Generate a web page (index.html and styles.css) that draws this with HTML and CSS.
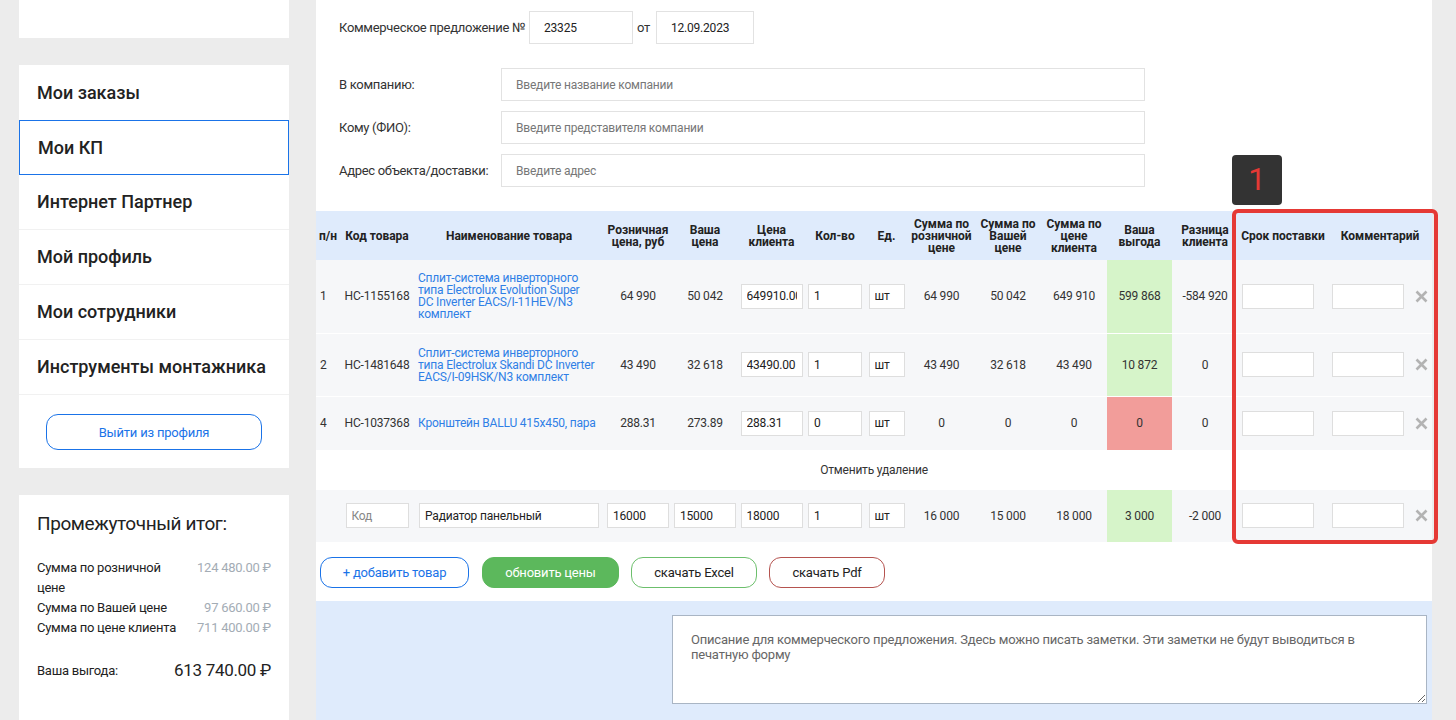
FILE: index.html
```html
<!DOCTYPE html>
<html lang="ru">
<head>
<meta charset="utf-8">
<title>Мои КП</title>
<link rel="stylesheet" href="styles.css">
</head>
<body>
<div class="page">
  <aside class="sidebar">
    <div class="card card-top"></div>
    <nav class="card menu">
      <a class="menu-item first" href="#">Мои заказы</a>
      <a class="menu-item active" href="#">Мои КП</a>
      <a class="menu-item" href="#">Интернет Партнер</a>
      <a class="menu-item" href="#">Мой профиль</a>
      <a class="menu-item" href="#">Мои сотрудники</a>
      <a class="menu-item" href="#">Инструменты монтажника</a>
      <div class="logout-wrap"><button class="logout">Выйти из профиля</button></div>
    </nav>
    <div class="card summary">
      <h3 class="summary-title">Промежуточный итог:</h3>
      <div class="sum-grid">
        <div class="sum-label">Сумма по розничной цене</div><div class="sum-val">124 480.00 ₽</div>
        <div class="sum-label">Сумма по Вашей цене</div><div class="sum-val">97 660.00 ₽</div>
        <div class="sum-label">Сумма по цене клиента</div><div class="sum-val">711 400.00 ₽</div>
      </div>
      <div class="total"><span class="total-label">Ваша выгода:</span><span class="total-val">613 740.00 ₽</span></div>
    </div>
  </aside>

  <main class="main">
    <div class="kp-head">
      <span class="kp-label">Коммерческое предложение №</span>
      <input class="field kp-num" value="23325">
      <span class="kp-from">от</span>
      <input class="field kp-date" value="12.09.2023">
    </div>

    <div class="fields">
      <div class="field-row"><label class="field-label">В компанию:</label><input class="field wide" placeholder="Введите название компании"></div>
      <div class="field-row"><label class="field-label">Кому (ФИО):</label><input class="field wide" placeholder="Введите представителя компании"></div>
      <div class="field-row"><label class="field-label">Адрес объекта/доставки:</label><input class="field wide" placeholder="Введите адрес"></div>
    </div>

    <div class="table-wrap">
      <table class="goods">
        <colgroup>
          <col class="c-num"><col class="c-code"><col class="c-name"><col class="c-p"><col class="c-p2"><col class="c-p3">
          <col class="c-qty"><col class="c-unit"><col class="c-s1"><col class="c-s2"><col class="c-s3"><col class="c-gain">
          <col class="c-diff"><col class="c-term"><col class="c-comm"><col class="c-del">
        </colgroup>
        <thead>
          <tr>
            <th>п/н</th><th>Код товара</th><th>Наименование товара</th><th>Розничная<br>цена, руб</th><th>Ваша<br>цена</th><th>Цена<br>клиента</th><th>Кол-во</th><th>Ед.</th><th>Сумма по<br>розничной<br>цене</th><th>Сумма по<br>Вашей<br>цене</th><th>Сумма по<br>цене<br>клиента</th><th>Ваша<br>выгода</th><th>Разница<br>клиента</th><th>Срок поставки</th><th colspan="2" class="th-comm">Комментарий</th>
          </tr>
        </thead>
        <tbody>
          <tr class="row r1">
            <td class="num">1</td><td>HC-1155168</td>
            <td class="name"><a href="#">Сплит-система инверторного типа Electrolux Evolution Super DC&nbsp;Inverter EACS/I-11HEV/N3 комплект</a></td>
            <td>64 990</td><td>50 042</td>
            <td><input class="cell-in in-price" value="649910.00"></td>
            <td><input class="cell-in in-qty" value="1"></td>
            <td><input class="cell-in in-unit" value="шт"></td>
            <td>64 990</td><td>50 042</td><td>649 910</td>
            <td class="gain">599 868</td><td>-584 920</td>
            <td class="left"><input class="cell-in in-wide"></td>
            <td class="left"><input class="cell-in in-wide"></td>
            <td class="del"><svg width="13" height="13" viewBox="0 0 13 13"><path d="M1.5 1.5L11.5 11.5M11.5 1.5L1.5 11.5" stroke="#b3b3b3" stroke-width="2.6"/></svg></td>
          </tr>
          <tr class="row r2">
            <td class="num">2</td><td>HC-1481648</td>
            <td class="name"><a href="#">Сплит-система инверторного типа Electrolux Skandi DC Inverter EACS/I-09HSK/N3 комплект</a></td>
            <td>43 490</td><td>32 618</td>
            <td><input class="cell-in in-price" value="43490.00"></td>
            <td><input class="cell-in in-qty" value="1"></td>
            <td><input class="cell-in in-unit" value="шт"></td>
            <td>43 490</td><td>32 618</td><td>43 490</td>
            <td class="gain">10 872</td><td>0</td>
            <td class="left"><input class="cell-in in-wide"></td>
            <td class="left"><input class="cell-in in-wide"></td>
            <td class="del"><svg width="13" height="13" viewBox="0 0 13 13"><path d="M1.5 1.5L11.5 11.5M11.5 1.5L1.5 11.5" stroke="#b3b3b3" stroke-width="2.6"/></svg></td>
          </tr>
          <tr class="row r3">
            <td class="num">4</td><td>HC-1037368</td>
            <td class="name"><a href="#">Кронштейн BALLU 415x450, пара</a></td>
            <td>288.31</td><td>273.89</td>
            <td><input class="cell-in in-price" value="288.31"></td>
            <td><input class="cell-in in-qty" value="0"></td>
            <td><input class="cell-in in-unit" value="шт"></td>
            <td>0</td><td>0</td><td>0</td>
            <td class="loss">0</td><td>0</td>
            <td class="left"><input class="cell-in in-wide"></td>
            <td class="left"><input class="cell-in in-wide"></td>
            <td class="del"><svg width="13" height="13" viewBox="0 0 13 13"><path d="M1.5 1.5L11.5 11.5M11.5 1.5L1.5 11.5" stroke="#b3b3b3" stroke-width="2.6"/></svg></td>
          </tr>
          <tr class="cancel">
            <td colspan="16">Отменить удаление</td>
          </tr>
          <tr class="row r-new">
            <td></td>
            <td><input class="cell-in in-code" placeholder="Код"></td>
            <td><input class="cell-in in-name" value="Радиатор панельный"></td>
            <td><input class="cell-in in-price" value="16000"></td>
            <td><input class="cell-in in-price" value="15000"></td>
            <td><input class="cell-in in-price" value="18000"></td>
            <td><input class="cell-in in-qty" value="1"></td>
            <td><input class="cell-in in-unit" value="шт"></td>
            <td>16 000</td><td>15 000</td><td>18 000</td>
            <td class="gain">3 000</td><td>-2 000</td>
            <td class="left"><input class="cell-in in-wide"></td>
            <td class="left"><input class="cell-in in-wide"></td>
            <td class="del"><svg width="13" height="13" viewBox="0 0 13 13"><path d="M1.5 1.5L11.5 11.5M11.5 1.5L1.5 11.5" stroke="#b3b3b3" stroke-width="2.6"/></svg></td>
          </tr>
        </tbody>
      </table>
      <div class="badge">1</div>
      <div class="highlight"></div>
    </div>

    <div class="actions">
      <button class="btn btn-add">+ добавить товар</button>
      <button class="btn btn-update">обновить цены</button>
      <button class="btn btn-excel">скачать Excel</button>
      <button class="btn btn-pdf">скачать Pdf</button>
    </div>

    <div class="notes">
      <textarea class="notes-area" placeholder="Описание для коммерческого предложения. Здесь можно писать заметки. Эти заметки не будут выводиться в печатную форму"></textarea>
    </div>
  </main>
</div>
</body>
</html>
```
FILE: styles.css
```css
* { box-sizing: border-box; }

body {
  margin: 0;
  background: #ececec;
  font-family: Roboto, "Noto Sans", Arial, sans-serif;
  color: #222;
  letter-spacing: -0.2px;
}

.page {
  display: flex;
  gap: 27px;
  padding-left: 19px;
  height: 720px;
  overflow: hidden;
}

/* Sidebar */
.sidebar {
  width: 270px;
  flex-shrink: 0;
  display: flex;
  flex-direction: column;
  gap: 27px;
}

.card { background: #fff; }

.card-top { height: 38px; }

.menu {
  display: flex;
  flex-direction: column;
}

.menu-item {
  height: 55px;
  display: flex;
  align-items: center;
  padding-left: 18px;
  padding-bottom: 1px;
  font-size: 18px;
  font-weight: 500;
  letter-spacing: 0;
  color: #222;
  text-decoration: none;
  border-bottom: 1px solid #f1f1f1;
}

.menu-item.first { border-bottom: none; }

.menu-item.active {
  border: 1px solid #1a73e8;
}

.logout-wrap {
  height: 73px;
  padding: 19px 27px 0;
}

.logout {
  width: 216px;
  height: 36px;
  border: 1px solid #1a73e8;
  border-radius: 12px;
  background: #fff;
  color: #1a73e8;
  font-family: Roboto, Arial, sans-serif;
  font-size: 13px;
  letter-spacing: -0.2px;
}

.summary {
  flex: 1;
  padding: 18px 18px;
}

.summary-title {
  margin: 0 0 23px;
  font-size: 19px;
  line-height: 22px;
  font-weight: 400;
  letter-spacing: -0.4px;
  color: #222;
}

.sum-grid {
  display: grid;
  grid-template-columns: 145px 1fr;
  font-size: 13px;
  line-height: 20px;
  letter-spacing: -0.25px;
}

.sum-val {
  text-align: right;
  color: #a3acb5;
}

.total {
  display: flex;
  justify-content: space-between;
  align-items: center;
  margin-top: 21px;
}

.total-label { font-size: 13px; letter-spacing: -0.25px; }

.total-val {
  font-size: 17px;
  line-height: 22px;
  letter-spacing: -0.3px;
}

/* Main */
.main {
  width: 1116px;
  flex-shrink: 0;
  background: #fff;
  padding-top: 11px;
  display: flex;
  flex-direction: column;
}

.kp-head {
  display: flex;
  align-items: center;
  height: 33px;
  padding-left: 23px;
  font-size: 13px;
  letter-spacing: -0.3px;
  color: #333;
}

.field {
  height: 33px;
  border: 1px solid #e2e2e2;
  background: #fff;
  padding: 0 14px;
  font-family: Roboto, Arial, sans-serif;
  font-size: 12px;
  letter-spacing: -0.2px;
  color: #222;
  outline: none;
}

.field::placeholder { color: #777; }

.kp-num { width: 104px; margin-left: 4px; }
.kp-from { margin: 0 6px 0 4px; }
.kp-date { width: 98px; }

.fields {
  margin-top: 24px;
  padding-left: 23px;
  display: flex;
  flex-direction: column;
  gap: 10px;
}

.field-row {
  display: flex;
  align-items: center;
}

.field-label {
  width: 162px;
  font-size: 13px;
  letter-spacing: -0.3px;
  color: #333;
}

.wide { width: 644px; }

/* Table */
.table-wrap {
  position: relative;
  margin-top: 24px;
}

.goods {
  width: 1116px;
  border-collapse: collapse;
  table-layout: fixed;
  font-size: 12px;
  color: #333;
}

.c-num { width: 24px; }
.c-code { width: 74px; }
.c-name { width: 190px; }
.c-p { width: 68px; }
.c-p2 { width: 66px; }
.c-p3 { width: 67px; }
.c-qty { width: 60px; }
.c-unit { width: 43px; }
.c-s1 { width: 67px; }
.c-s2 { width: 66px; }
.c-s3 { width: 66px; }
.c-gain { width: 65px; }
.c-diff { width: 66px; }
.c-term { width: 90px; }
.c-comm { width: 82px; }
.c-del { width: 22px; }

.goods th {
  height: 49px;
  background: #dfebfc;
  font-weight: 700;
  font-size: 12px;
  line-height: 12px;
  letter-spacing: 0;
  color: #222;
  padding: 0 1px;
  text-align: center;
  vertical-align: middle;
}

.goods td {
  padding: 0 2px;
  text-align: center;
  vertical-align: middle;
  line-height: 12px;
  border-bottom: 1px solid #fff;
}

.row td { background: #f6f7f9; }

.r1 td { height: 73px; }
.r2 td { height: 63px; }
.r3 td { height: 54px; }
.r-new td { height: 53px; border-bottom: none; }

.goods td.num {
  text-align: left;
  padding-left: 4px;
}

.goods td.name {
  text-align: left;
  padding: 0 4px;
}

.name a {
  color: #2f7fe6;
  text-decoration: none;
}

.goods td.left {
  text-align: left;
  padding-left: 4px;
}

.row td.gain { background: #d6f4c9; }
.row td.loss { background: #f29d9a; }

.goods td.del { padding: 0; }
.del svg { display: block; margin: 0 auto; }

.cancel td {
  height: 39px;
  background: #fff;
  color: #333;
}

.cell-in {
  height: 25px;
  border: 1px solid #dedede;
  background: #fff;
  padding: 0 5px;
  font-family: Roboto, Arial, sans-serif;
  font-size: 12px;
  letter-spacing: -0.2px;
  color: #222;
  outline: none;
  vertical-align: middle;
}

.cell-in::placeholder { color: #888; }

.in-price { width: 62px; }
.in-qty { width: 54px; }
.in-unit { width: 36px; }
.in-wide { width: 72px; }
.in-code { width: 63px; }
.in-name { width: 180px; }

.badge {
  position: absolute;
  left: 916px;
  top: -56px;
  width: 50px;
  height: 50px;
  background: #333;
  border-radius: 4px;
  color: #e53935;
  font-size: 31px;
  line-height: 50px;
  letter-spacing: 0;
  text-align: center;
}

.highlight {
  position: absolute;
  left: 916px;
  top: -2px;
  width: 206px;
  height: 335px;
  border: 4px solid #e53935;
  border-radius: 6px;
  pointer-events: none;
}

/* Actions */
.actions {
  display: flex;
  align-items: center;
  margin-top: 15px;
  padding-left: 4px;
}

.btn {
  height: 31px;
  border-radius: 12px;
  background: #fff;
  font-family: Roboto, Arial, sans-serif;
  font-size: 13px;
  letter-spacing: -0.2px;
  border: 1px solid;
  margin-right: 12px;
}

.btn-add { width: 149px; border-color: #1a73e8; color: #1a73e8; margin-right: 13px; }
.btn-update { width: 137px; background: #5cb85c; border-color: #5cb85c; color: #fff; }
.btn-excel { width: 126px; border-color: #6cbf6c; color: #222; }
.btn-pdf { width: 116px; border-color: #b5534f; color: #222; }

/* Notes */
.notes {
  margin-top: 13px;
  flex: 1;
  background: #dfebfc;
  padding: 14px 5px 0 356px;
}

.notes-area {
  display: block;
  width: 755px;
  height: 89px;
  border: 1px solid #a9b5c4;
  background: #fff;
  padding: 16px 30px 16px 18px;
  font-family: Roboto, Arial, sans-serif;
  font-size: 13px;
  line-height: 15px;
  letter-spacing: -0.2px;
  color: #333;
  resize: vertical;
}

.notes-area::placeholder { color: #666; }
```
